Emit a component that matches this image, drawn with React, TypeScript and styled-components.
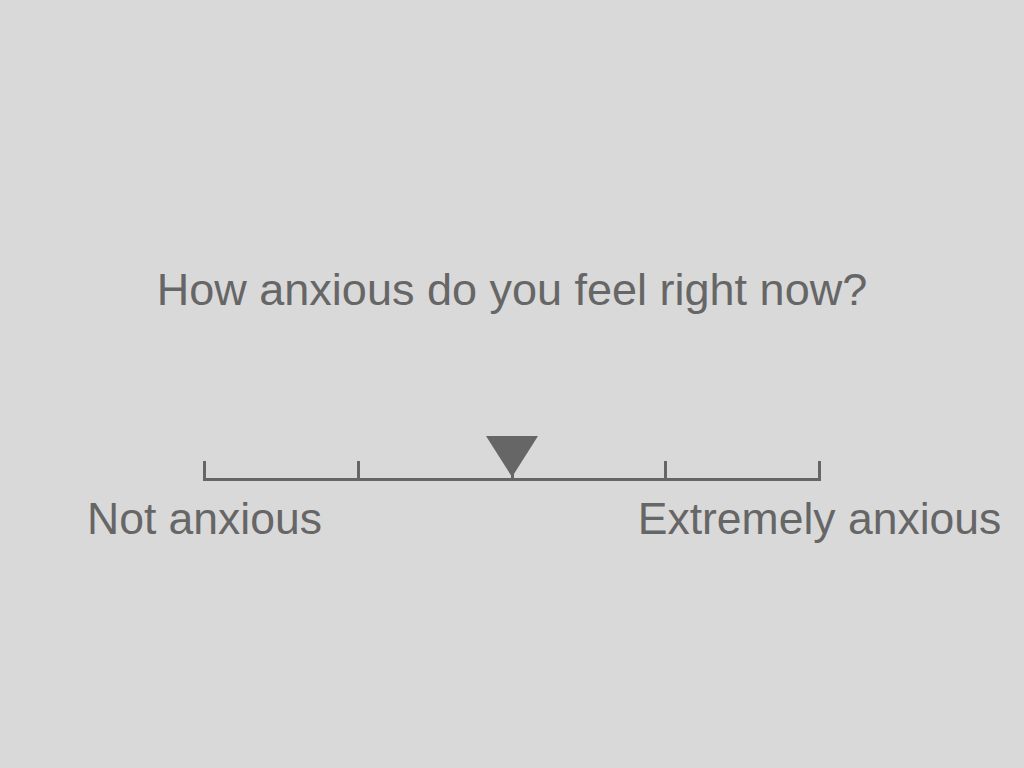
import React from "react";
import styled, { createGlobalStyle } from "styled-components";

const GlobalStyle = createGlobalStyle`
  html, body {
    margin: 0;
    padding: 0;
    background: #d9d9d9;
  }
  body {
    font-family: "Liberation Sans", Arial, sans-serif;
  }
`;

const Page = styled.div`
  width: 1024px;
  height: 768px;
  display: flex;
  flex-direction: column;
  align-items: center;
  background: #d9d9d9;
  color: #666666;
  overflow: hidden;
`;

const Question = styled.div`
  margin-top: 267px;
  font-size: 45px;
  line-height: 45px;
  white-space: nowrap;
`;

const ScaleWrap = styled.div`
  position: relative;
  width: 618px;
  margin-top: 124px;
  padding-top: 25px;
`;

const Track = styled.div`
  height: 17px;
  border-bottom: 3px solid #666666;
  display: flex;
  justify-content: space-between;
  align-items: stretch;
`;

const Tick = styled.div`
  width: 3px;
  background: #666666;
`;

const Marker = styled.div`
  position: absolute;
  top: 0;
  width: 0;
  height: 0;
  border-left: 26px solid transparent;
  border-right: 26px solid transparent;
  border-top: 41px solid #666666;
  transform: translateX(-50%);
`;

const Labels = styled.div`
  width: 615px;
  margin-top: 16px;
  display: flex;
  justify-content: space-between;
`;

const Label = styled.div`
  width: 0;
  display: flex;
  justify-content: center;
  font-size: 44.5px;
  line-height: 44px;
  white-space: nowrap;
`;

const value = 0.5;

export default function App() {
  return (
    <>
      <GlobalStyle />
      <Page>
        <Question>How anxious do you feel right now?</Question>
        <ScaleWrap>
          <Track>
            {[0, 1, 2, 3, 4].map((i) => (
              <Tick key={i} />
            ))}
          </Track>
          <Marker style={{ left: `${value * 100}%` }} />
        </ScaleWrap>
        <Labels>
          <Label>Not anxious</Label>
          <Label>Extremely anxious</Label>
        </Labels>
      </Page>
    </>
  );
}
